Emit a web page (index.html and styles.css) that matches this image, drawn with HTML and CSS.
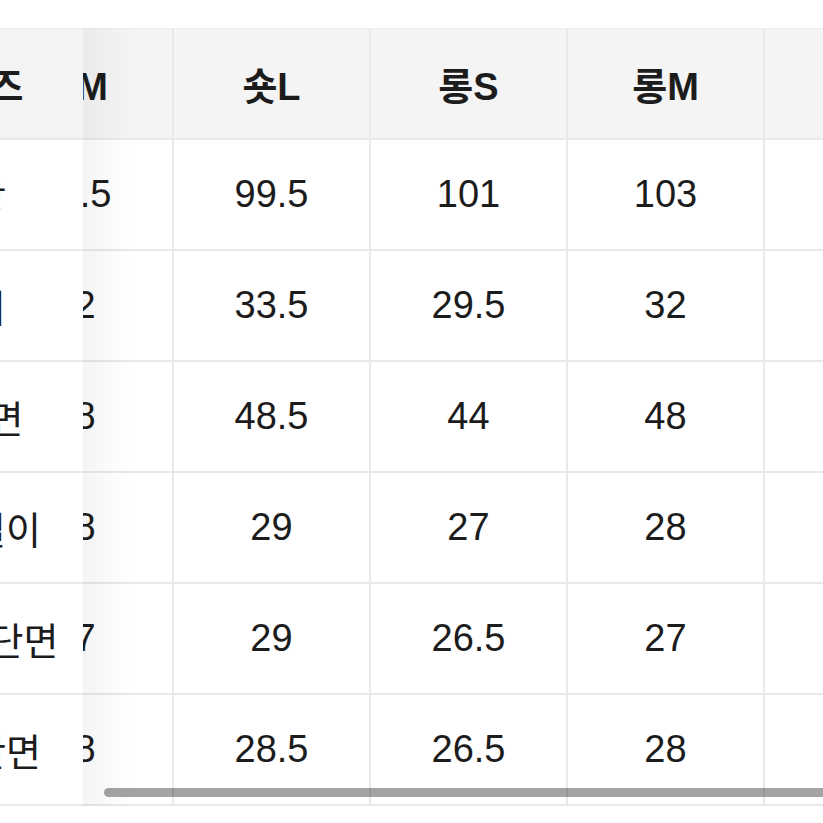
FILE: index.html
```html
<!DOCTYPE html>
<html lang="ko">
<head>
<meta charset="utf-8">
<title>사이즈표</title>
<link rel="stylesheet" href="styles.css">
</head>
<body>
<div class="size-table">
  <div class="fixed-col">
    <div class="cell head">사이즈</div>
    <div class="cell">총장</div>
    <div class="cell">허리</div>
    <div class="cell">힙단면</div>
    <div class="cell">밑위길이</div>
    <div class="cell">허벅지단면</div>
    <div class="cell">밑단단면</div>
  </div>
  <div class="scroll-area">
    <div class="grid">
      <div class="cell head">숏M</div>
      <div class="cell head">숏L</div>
      <div class="cell head">롱S</div>
      <div class="cell head">롱M</div>
      <div class="cell head">롱L</div>

      <div class="cell">98.5</div>
      <div class="cell">99.5</div>
      <div class="cell">101</div>
      <div class="cell">103</div>
      <div class="cell">104</div>

      <div class="cell">32</div>
      <div class="cell">33.5</div>
      <div class="cell">29.5</div>
      <div class="cell">32</div>
      <div class="cell">33.5</div>

      <div class="cell">48</div>
      <div class="cell">48.5</div>
      <div class="cell">44</div>
      <div class="cell">48</div>
      <div class="cell">48.5</div>

      <div class="cell">28</div>
      <div class="cell">29</div>
      <div class="cell">27</div>
      <div class="cell">28</div>
      <div class="cell">29</div>

      <div class="cell">27</div>
      <div class="cell">29</div>
      <div class="cell">26.5</div>
      <div class="cell">27</div>
      <div class="cell">29</div>

      <div class="cell">28</div>
      <div class="cell">28.5</div>
      <div class="cell">26.5</div>
      <div class="cell">28</div>
      <div class="cell">28.5</div>
    </div>
    <div class="scroll-thumb"></div>
  </div>
</div>
</body>
</html>
```

FILE: styles.css
```css
html, body {
  margin: 0;
  padding: 0;
  background: #ffffff;
}

body {
  font-family: "Liberation Sans", "Noto Sans CJK KR", sans-serif;
  color: #1c1c1c;
  overflow: hidden;
}

.size-table {
  margin-top: 28px;
  display: flex;
  width: 823px;
  overflow: hidden;
}

.fixed-col {
  flex: 0 0 228px;
  margin-left: -145px;
  padding-left: 4px;
  box-sizing: border-box;
  display: flex;
  flex-direction: column;
  background: #ffffff;
}

.scroll-area {
  flex: 1;
  position: relative;
  overflow: hidden;
}

.scroll-area::after {
  content: "";
  position: absolute;
  left: 0;
  top: 0;
  bottom: 0;
  width: 50px;
  background: linear-gradient(to right, rgba(0, 0, 0, 0.045), rgba(0, 0, 0, 0.015) 60%, rgba(0, 0, 0, 0));
  pointer-events: none;
}

.grid {
  margin-left: -106px;
  display: grid;
  grid-template-columns: repeat(5, 197px);
  grid-template-rows: 112px repeat(6, 111px);
  width: max-content;
}

.cell {
  box-sizing: border-box;
  height: 111px;
  display: flex;
  align-items: center;
  justify-content: center;
  font-size: 38px;
  white-space: nowrap;
  border-bottom: 2px solid #e9e9e9;
  background: #ffffff;
}

.grid .cell {
  border-right: 2px solid #e9e9e9;
}

.cell.head {
  height: 112px;
  font-weight: 700;
  background: #f4f4f4;
  border-top: 1px solid #ededed;
}

.fixed-col .cell.head {
  background: #f3f3f3;
}

.scroll-thumb {
  position: absolute;
  left: 21px;
  bottom: 9px;
  width: 760px;
  height: 9px;
  border-radius: 5px;
  background: rgba(0, 0, 0, 0.36);
}
```
